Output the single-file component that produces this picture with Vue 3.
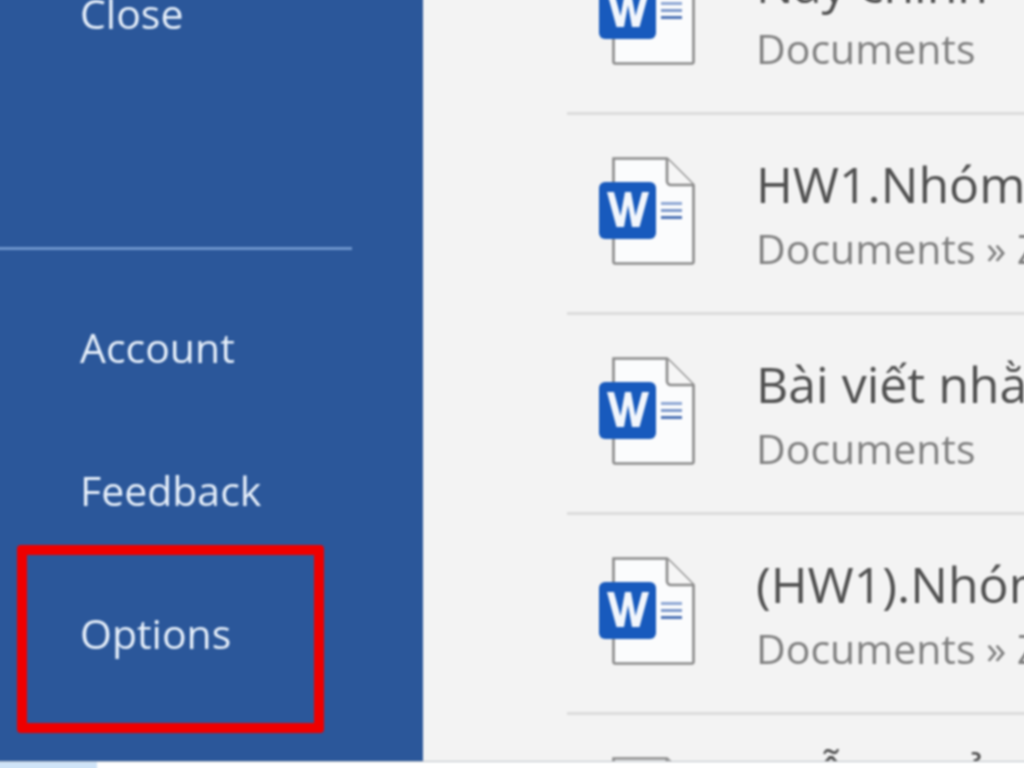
<script setup>
const menu = ['Account', 'Feedback', 'Options']
const docs = [
  { title: 'Này chính', path: 'Documents' },
  { title: 'HW1.Nhóm 3 báo cáo', path: 'Documents » Zalo' },
  { title: 'Bài viết nhằm giới thiệu', path: 'Documents' },
  { title: '(HW1).Nhóm 3 báo cáo', path: 'Documents » Zalo' },
  { title: 'quẫn an ở', path: 'Documents', raised: true }
]
</script>

<template>
  <div class="screen">
    <div class="main">
      <aside class="side">
        <div class="close">Close</div>
        <div class="rule"></div>
        <nav class="menu">
          <div v-for="m in menu" :key="m" class="item">
            <span>{{ m }}</span>
            <div v-if="m === 'Options'" class="mark"></div>
          </div>
        </nav>
      </aside>
      <section class="list">
        <div v-for="d in docs" :key="d.title" class="row">
          <svg class="ico" width="98" height="110" viewBox="0 0 98 110">
            <path d="M15.5 2.5H69L95.5 29V106a1.5 1.5 0 0 1-1.5 1.5H17a1.5 1.5 0 0 1-1.5-1.5Z" fill="#fbfcfd" stroke="#8a8a8a" stroke-width="2.6"/>
            <path d="M69 2.5V25a4 4 0 0 0 4 4H95.5" fill="#f6f6f6" stroke="#8a8a8a" stroke-width="2.6"/>
            <rect x="1" y="26" width="57" height="57" rx="6" fill="#185abd"/>
            <path d="M9 36H16L22.5 60L27 36H33L37.5 60L44 36H51L41.5 71H34L30 49L26 71H18.5Z" fill="#f2f6fc"/>
            <path d="M63 47.5H84" stroke="#8fa8d4" stroke-width="3"/>
            <path d="M63 54.5H84" stroke="#7d99cc" stroke-width="3"/>
            <path d="M63 61.5H84" stroke="#4d72b5" stroke-width="3"/>
          </svg>
          <div class="text">
            <div class="title" :class="{ raised: d.raised }">{{ d.title }}</div>
            <div class="path">{{ d.path }}</div>
          </div>
        </div>
      </section>
    </div>
    <div class="strip"><div class="strip-tab"></div></div>
  </div>
</template>

<style>
html, body { margin: 0; overflow: hidden; height: 100%; }
</style>

<style scoped>
.screen { width: 1044px; height: 788px; margin: -10px 0 0 -10px; overflow: hidden; display: flex; flex-direction: column; font-family: "Open Sans", "Noto Sans", sans-serif; filter: blur(0.8px); }
.main { flex: 1; min-height: 0; display: flex; overflow: hidden; }
.side { width: 433px; flex: none; box-sizing: border-box; padding: 10px 0 0 10px; background: #2b579a; color: #e6effa; font-size: 41px; }
.close { height: 26px; line-height: 26px; padding-left: 80px; }
.rule { width: 352px; height: 3px; margin-top: 221px; margin-left: -10px; padding-left: 10px; background: #6d94cb; }
.menu { margin-top: 25px; display: flex; flex-direction: column; }
.item { position: relative; height: 143px; padding-left: 80px; display: flex; align-items: center; }
.mark { position: absolute; left: 17px; top: -16px; width: 307px; height: 188px; box-sizing: border-box; border: 10px solid #ee0000; border-radius: 4px; }
.list { flex: 1; background: #f3f3f3; padding-left: 144px; margin-top: -75px; }
.row { height: 200px; box-sizing: border-box; display: flex; align-items: flex-start; gap: 60px; padding: 41px 0 0 31px; border-bottom: 3px solid #dcdcdc; }
.ico { flex: none; }
.text { white-space: nowrap; }
.title { font-size: 50px; line-height: 56px; color: #505050; }
.title.raised { margin-top: -10px; }
.path { font-size: 41px; line-height: 44px; margin-top: 14px; color: #808080; }
.strip { height: 17px; flex: none; box-sizing: border-box; background: #fff; border-top: 1px solid #b9bfc6; }
.strip-tab { width: 107px; height: 16px; background: #cfe4f8; }
</style>
